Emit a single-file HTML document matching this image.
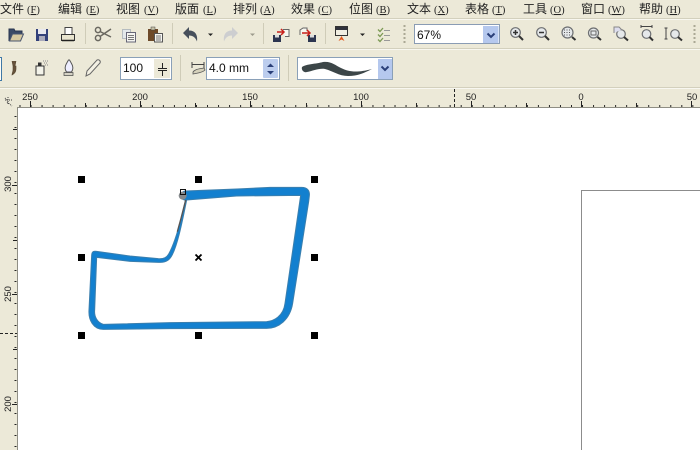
<!DOCTYPE html>
<html><head><meta charset="utf-8"><style>
html,body{margin:0;padding:0;width:700px;height:450px;overflow:hidden;background:#ece9d8}
svg{display:block}
.m{font:12px "WenQuanYi Zen Hei","Noto Sans CJK SC",sans-serif;fill:#222}
.k{font:10.5px "Liberation Serif",serif;fill:#222}
.r{font:9.5px "Liberation Sans",sans-serif;fill:#222}
.i{font:12px "Liberation Sans",sans-serif;fill:#111}
</style></head><body>
<svg width="700" height="450" viewBox="0 0 700 450" xmlns="http://www.w3.org/2000/svg">
<rect width="700" height="450" fill="#ece9d8"/>
<!-- menu -->
<g>
<text class="m" x="0" y="13">文件</text><text class="k" x="27" y="13">(<tspan text-decoration="underline">F</tspan>)</text>
<text class="m" x="58" y="13">编辑</text><text class="k" x="86" y="13">(<tspan text-decoration="underline">E</tspan>)</text>
<text class="m" x="116" y="13">视图</text><text class="k" x="144" y="13">(<tspan text-decoration="underline">V</tspan>)</text>
<text class="m" x="175" y="13">版面</text><text class="k" x="203" y="13">(<tspan text-decoration="underline">L</tspan>)</text>
<text class="m" x="233" y="13">排列</text><text class="k" x="260" y="13">(<tspan text-decoration="underline">A</tspan>)</text>
<text class="m" x="291" y="13">效果</text><text class="k" x="318" y="13">(<tspan text-decoration="underline">C</tspan>)</text>
<text class="m" x="349" y="13">位图</text><text class="k" x="376" y="13">(<tspan text-decoration="underline">B</tspan>)</text>
<text class="m" x="407" y="13">文本</text><text class="k" x="434" y="13">(<tspan text-decoration="underline">X</tspan>)</text>
<text class="m" x="465" y="13">表格</text><text class="k" x="492" y="13">(<tspan text-decoration="underline">T</tspan>)</text>
<text class="m" x="523" y="13">工具</text><text class="k" x="550" y="13">(<tspan text-decoration="underline">O</tspan>)</text>
<text class="m" x="581" y="13">窗口</text><text class="k" x="608" y="13">(<tspan text-decoration="underline">W</tspan>)</text>
<text class="m" x="639" y="13">帮助</text><text class="k" x="666" y="13">(<tspan text-decoration="underline">H</tspan>)</text>
</g>
<!-- toolbar lines -->
<path d="M0 18.5H700" stroke="#d3d0bd"/><path d="M0 19.5H700" stroke="#f8f7f0"/>
<path d="M0 48.5H700" stroke="#d3d0bd"/><path d="M0 49.5H700" stroke="#f8f7f0"/>
<path d="M0 87.5H700" stroke="#d3d0bd"/><path d="M0 88.5H700" stroke="#f8f7f0"/>
<!-- separators -->
<g stroke="#cfccb8"><path d="M85.5 23V44M172.5 23V44M263.5 23V44M325.5 23V44M180.5 55V81M288.5 55V81"/></g>
<path d="M404.5 25V44M694.5 25V44" stroke="#aaa894" stroke-width="2" stroke-dasharray="2 2"/>
<!-- open -->
<path d="M9 41V29h5l1 2h7v3" fill="#3b4a66" stroke="#2a3650"/><path d="M9.5 41l3-7h11l-3 7z" fill="#d7c9a0" stroke="#4a5670"/>
<!-- save -->
<rect x="36" y="29" width="12" height="12" fill="#33417a"/><rect x="38" y="29" width="8" height="5" fill="#e8e8ee"/><rect x="39" y="36" width="6" height="5" fill="#aab"/>
<!-- print -->
<rect x="65" y="27.5" width="7" height="7" fill="#fff" stroke="#444"/><rect x="61.5" y="34.5" width="13" height="6" fill="#e9e5cf" stroke="#333"/><path d="M62 40.5h12" stroke="#222" stroke-width="1.5"/>
<!-- scissors -->
<g fill="none" stroke="#6a6860" stroke-width="1.5"><circle cx="98" cy="30" r="2.6"/><circle cx="98" cy="38" r="2.6"/><path d="M100 31.5L111 37M100 36.5L111 29"/></g>
<!-- copy -->
<rect x="122.5" y="29.5" width="8" height="9" fill="#e3e8ea" stroke="#b5bcc0"/><rect x="126.5" y="32.5" width="9" height="9.5" fill="#f4f4f0" stroke="#667"/><path d="M128 35.5h6M128 37.5h6M128 39.5h6" stroke="#777"/>
<!-- paste -->
<rect x="148" y="29" width="10" height="12" fill="#6d4a2a"/><rect x="151" y="27" width="4" height="3" fill="#c8c3a8" stroke="#444" stroke-width=".5"/><rect x="154.5" y="33.5" width="8" height="8.5" fill="#f6f6f2" stroke="#555"/><path d="M156 36h5M156 38h5M156 40h5" stroke="#777"/>
<!-- undo -->
<path d="M183 33l6-6v3.5c6 0 9 4 8 11-1.5-4-4-6-8-6V39z" fill="#47505c"/>
<path d="M208 33.5h5l-2.5 2.500z" fill="#222"/>
<!-- redo -->
<path d="M238 33l-6-6v3.5c-6 0-9 4-8 11 1.5-4 4-6 8-6V39z" fill="#cdced0"/>
<path d="M250 33.5h5l-2.5 2.500z" fill="#9c9a8c"/>
<!-- import -->
<rect x="273" y="35" width="8" height="7" fill="#2c3550"/><rect x="275" y="35" width="4" height="2.5" fill="#ddd"/><path d="M283 29.5h6v7h-4" fill="#f7f7f0" stroke="#666"/><path d="M277 32h7M281 29l3 3-3 3" stroke="#c8201c" stroke-width="1.5" fill="none"/>
<!-- export -->
<rect x="308" y="35" width="8" height="7" fill="#2c3550"/><rect x="310" y="35" width="4" height="2.5" fill="#ddd"/><path d="M300 35v-5l3-2h4v3" fill="#f7f7f0" stroke="#666"/><path d="M302 33h8M307 30l3 3-3 3" stroke="#c8201c" stroke-width="1.5" fill="none"/>
<!-- launcher -->
<rect x="335.5" y="26.5" width="12" height="9" fill="#f0eee2" stroke="#333"/><rect x="336" y="27" width="11" height="3" fill="#30323c"/><path d="M341.5 36l-3 5 3-1.5 3 1.500z" fill="#e2571c"/>
<path d="M360 33.5h5l-2.5 2.500z" fill="#222"/>
<!-- options -->
<path d="M378 29.5l2 2 3-3.500M378 34.500l2 2 3-3.500M378 39.500l2 2 3-3.500" stroke="#7d9a55" fill="none" stroke-width="1.3"/><path d="M384 30.5h6M384 35.500h6M384 40.500h6" stroke="#999"/>
<!-- zoom combo -->
<rect x="414.5" y="24.5" width="85" height="19" fill="#fff" stroke="#8a9cb4"/>
<text class="i" x="417" y="39">67%</text>
<rect x="483" y="26" width="15.5" height="17" fill="#b5c8ee"/>
<path d="M487.5 33.5l3.5 3.5 3.5-3.500" fill="none" stroke="#2a3f78" stroke-width="2"/>
<!-- zoom icons -->
<g fill="#e5e8ea" stroke="#6d6f72" stroke-width="1.2">
<circle cx="515.5" cy="32.5" r="4.8"/><circle cx="541.5" cy="32.5" r="4.8"/><circle cx="567.5" cy="32.5" r="5.5"/><circle cx="593.5" cy="33" r="5"/><circle cx="621" cy="34" r="4.3"/><circle cx="646.5" cy="34" r="4.3"/><circle cx="675" cy="34" r="4.3"/>
</g>
<g stroke="#333" stroke-width="2"><path d="M519 36l4 4M545 36l4 4M572 37l3.5 3M597.5 37l3.5 3M624 37l4 3.500M649.5 37l3.500 3.500M678 37l4 3.500"/></g>
<path d="M513 32.5h5M515.5 30v5" stroke="#333" stroke-width="1.500"/><path d="M539 32.5h5" stroke="#333" stroke-width="1.500"/>
<path d="M564 30h7M564 32.5h7M564 35h7" stroke="#555" stroke-dasharray="1 1.5"/>
<rect x="591" y="31" width="5" height="4" fill="none" stroke="#666"/>
<path d="M614 33v-6h5l2 2v1" fill="#dde" stroke="#888"/>
<path d="M641 26.5h11M641 25v3M652 25v3" stroke="#444"/>
<path d="M666 28v11M664.5 28h3M664.5 39h3" stroke="#444"/>
<!-- toolbar 2 -->
<path d="M0 57.5h1.500v23H0" fill="#fdfdf8" stroke="#3f78a6"/>
<path d="M12 61l1 5h2l1-5M13 66h3v3c0 3-2 5-4 6 0-2 1-3 1-5z" fill="#66523c" stroke="#55462f" stroke-width=".6"/>
<rect x="36" y="66" width="8" height="9" fill="#f3f3ea" stroke="#333"/><rect x="38" y="62.5" width="3.5" height="3.5" fill="#333"/><path d="M43 61h5M44 63h4M45 65h3" stroke="#888" stroke-dasharray="1 1"/>
<path d="M68.5 60c-3 5-4 7-3 10l1 2h5l1-2c1-3 0-5-3-10z" fill="#eef" stroke="#555"/><rect x="64" y="72.5" width="9" height="3" fill="#d5d2c5" stroke="#444" stroke-width=".7"/>
<path d="M86 76l1-5 10-11c2-1 4 1 3 3l-10 11z" fill="#f3f0e3" stroke="#666"/>
<!-- spin 100 -->
<rect x="120.5" y="57.5" width="51" height="22" fill="#fff" stroke="#8aa0b8"/>
<rect x="154" y="59" width="16" height="19" fill="#ece9d8"/>
<text class="i" x="123" y="72">100</text>
<path d="M158 68.5h9M158 70.5h9M162.5 63v5M162.5 71v5" stroke="#222"/>
<!-- width icon -->
<path d="M192 62v6M204 62v6M192 64.5h12" stroke="#444" fill="none"/><path d="M193 72c2-3 6-3 11-4l1 2c-3 3-8 3-12 4z" fill="#d6d2bc" stroke="#555" stroke-width=".8"/>
<!-- 4.0 mm -->
<rect x="206.5" y="57.5" width="73" height="22" fill="#fff" stroke="#8aa0b8"/>
<text class="i" x="209" y="72">4.0 mm</text>
<rect x="263" y="59" width="15" height="19" rx="1" fill="#bccdee"/>
<path d="M267 67l3.5-3.500 3.500 3.500z" fill="#2a3f78"/><path d="M267 71l3.500 3.500 3.500-3.500z" fill="#2a3f78"/>
<!-- brush combo -->
<rect x="297.5" y="57.5" width="95" height="22" fill="#fff" stroke="#8aa0b8"/>
<path d="M302 67c4-3 14-3 21-5 8-1 12 3 18 6 8 4 16 5 31 1-8 4-14 7-24 7-9 0-15-5-23-7-6-1-12 2-18 3-3 1-6-2-5-5z" fill="#3c4648"/>
<rect x="378" y="59" width="14" height="20" fill="#b5c8ee"/>
<path d="M381.5 66.5l3.500 3.500 3.500-3.500" fill="none" stroke="#2a3f78" stroke-width="2"/>
<!-- rulers -->
<g text-anchor="middle">
<text class="r" x="30" y="100">250</text><text class="r" x="140" y="100">200</text><text class="r" x="250" y="100">150</text><text class="r" x="361" y="100">100</text><text class="r" x="471" y="100">50</text><text class="r" x="581" y="100">0</text><text class="r" x="692" y="100">50</text>
</g>
<path d="M19 106H700" stroke="#222" stroke-width="2" stroke-dasharray="1 10.03" stroke-dashoffset="-.5"/>
<path d="M30.5 101v6M140.5 101v6M250.500 101v6M361.500 101v6M471.500 101v6M581.500 101v6M691.500 101v6M85.500 103v4M195.500 103v4M306.500 103v4M416.500 103v4M526.500 103v4M636.500 103v4" stroke="#222"/>
<path d="M454.5 89v18" stroke="#222" stroke-dasharray="3 2"/>
<g text-anchor="middle">
<text class="r" transform="translate(11,184) rotate(-90)">300</text>
<text class="r" transform="translate(11,294) rotate(-90)">250</text>
<text class="r" transform="translate(11,404) rotate(-90)">200</text>
</g>
<path d="M15.5 108V450" stroke="#222" stroke-width="2" stroke-dasharray="1 10" stroke-dashoffset="-8"/>
<path d="M12 185.5h5M12 294.500h5M12 404.500h5M13 129.500h4M13 240.500h4M13 349.500h4" stroke="#222"/>
<path d="M0 333.5h17" stroke="#222" stroke-dasharray="3 2"/>
<!-- ruler corner -->
<path d="M5 100h7M8 97v8M7 102l5 4M5 98l3 3" stroke="#444" fill="none" stroke-dasharray="1 1"/>
<!-- canvas -->
<rect x="17.5" y="107.5" width="683" height="343" fill="#fff" stroke="#8f8e84"/>
<path d="M581.5 450V190.5H700" fill="none" stroke="#8c8c8c"/>
<!-- shape -->
<g transform="translate(70 170) scale(.33333)">
<path fill="#1380cf" stroke="#3b7fae" stroke-width="3" fill-rule="evenodd" d="M345 63L500 57 600 52 695 52C712 52 720 62 718 78L716 95 668 400C660 450 625 475 590 475L300 476 100 478C70 478 55 450 57 420L65 255C66 243 72 243 80 244L180 258 265 266C283 267 290 262 296 252 310 228 322 190 335 140L346 95 345 90C330 90 328 66 345 63Z M350 90L500 78 692 76 645 400C640 440 610 453 590 455L300 458 100 463C82 458 72 440 74 420L80 262 180 274 265 277C290 279 300 268 307 254 322 224 334 170 350 90Z"/>
<path d="M347 90L333 145 322 185" stroke="#555" stroke-width="4" fill="none"/>
<circle cx="338" cy="77" r="12" fill="#85898c"/>
<rect x="331.5" y="58.5" width="15" height="15" fill="none" stroke="#111" stroke-width="3"/>
</g>
<!-- handles -->
<g fill="#000">
<rect x="78" y="176" width="7" height="7"/><rect x="195" y="176" width="7" height="7"/><rect x="311" y="176" width="7" height="7"/>
<rect x="78" y="254" width="7" height="7"/><rect x="311" y="254" width="7" height="7"/>
<rect x="78" y="332" width="7" height="7"/><rect x="195" y="332" width="7" height="7"/><rect x="311" y="332" width="7" height="7"/>
</g>
<path d="M195.5 254.5l6 6M201.5 254.5l-6 6" stroke="#000" stroke-width="1.8"/>
</svg>
</body></html>
